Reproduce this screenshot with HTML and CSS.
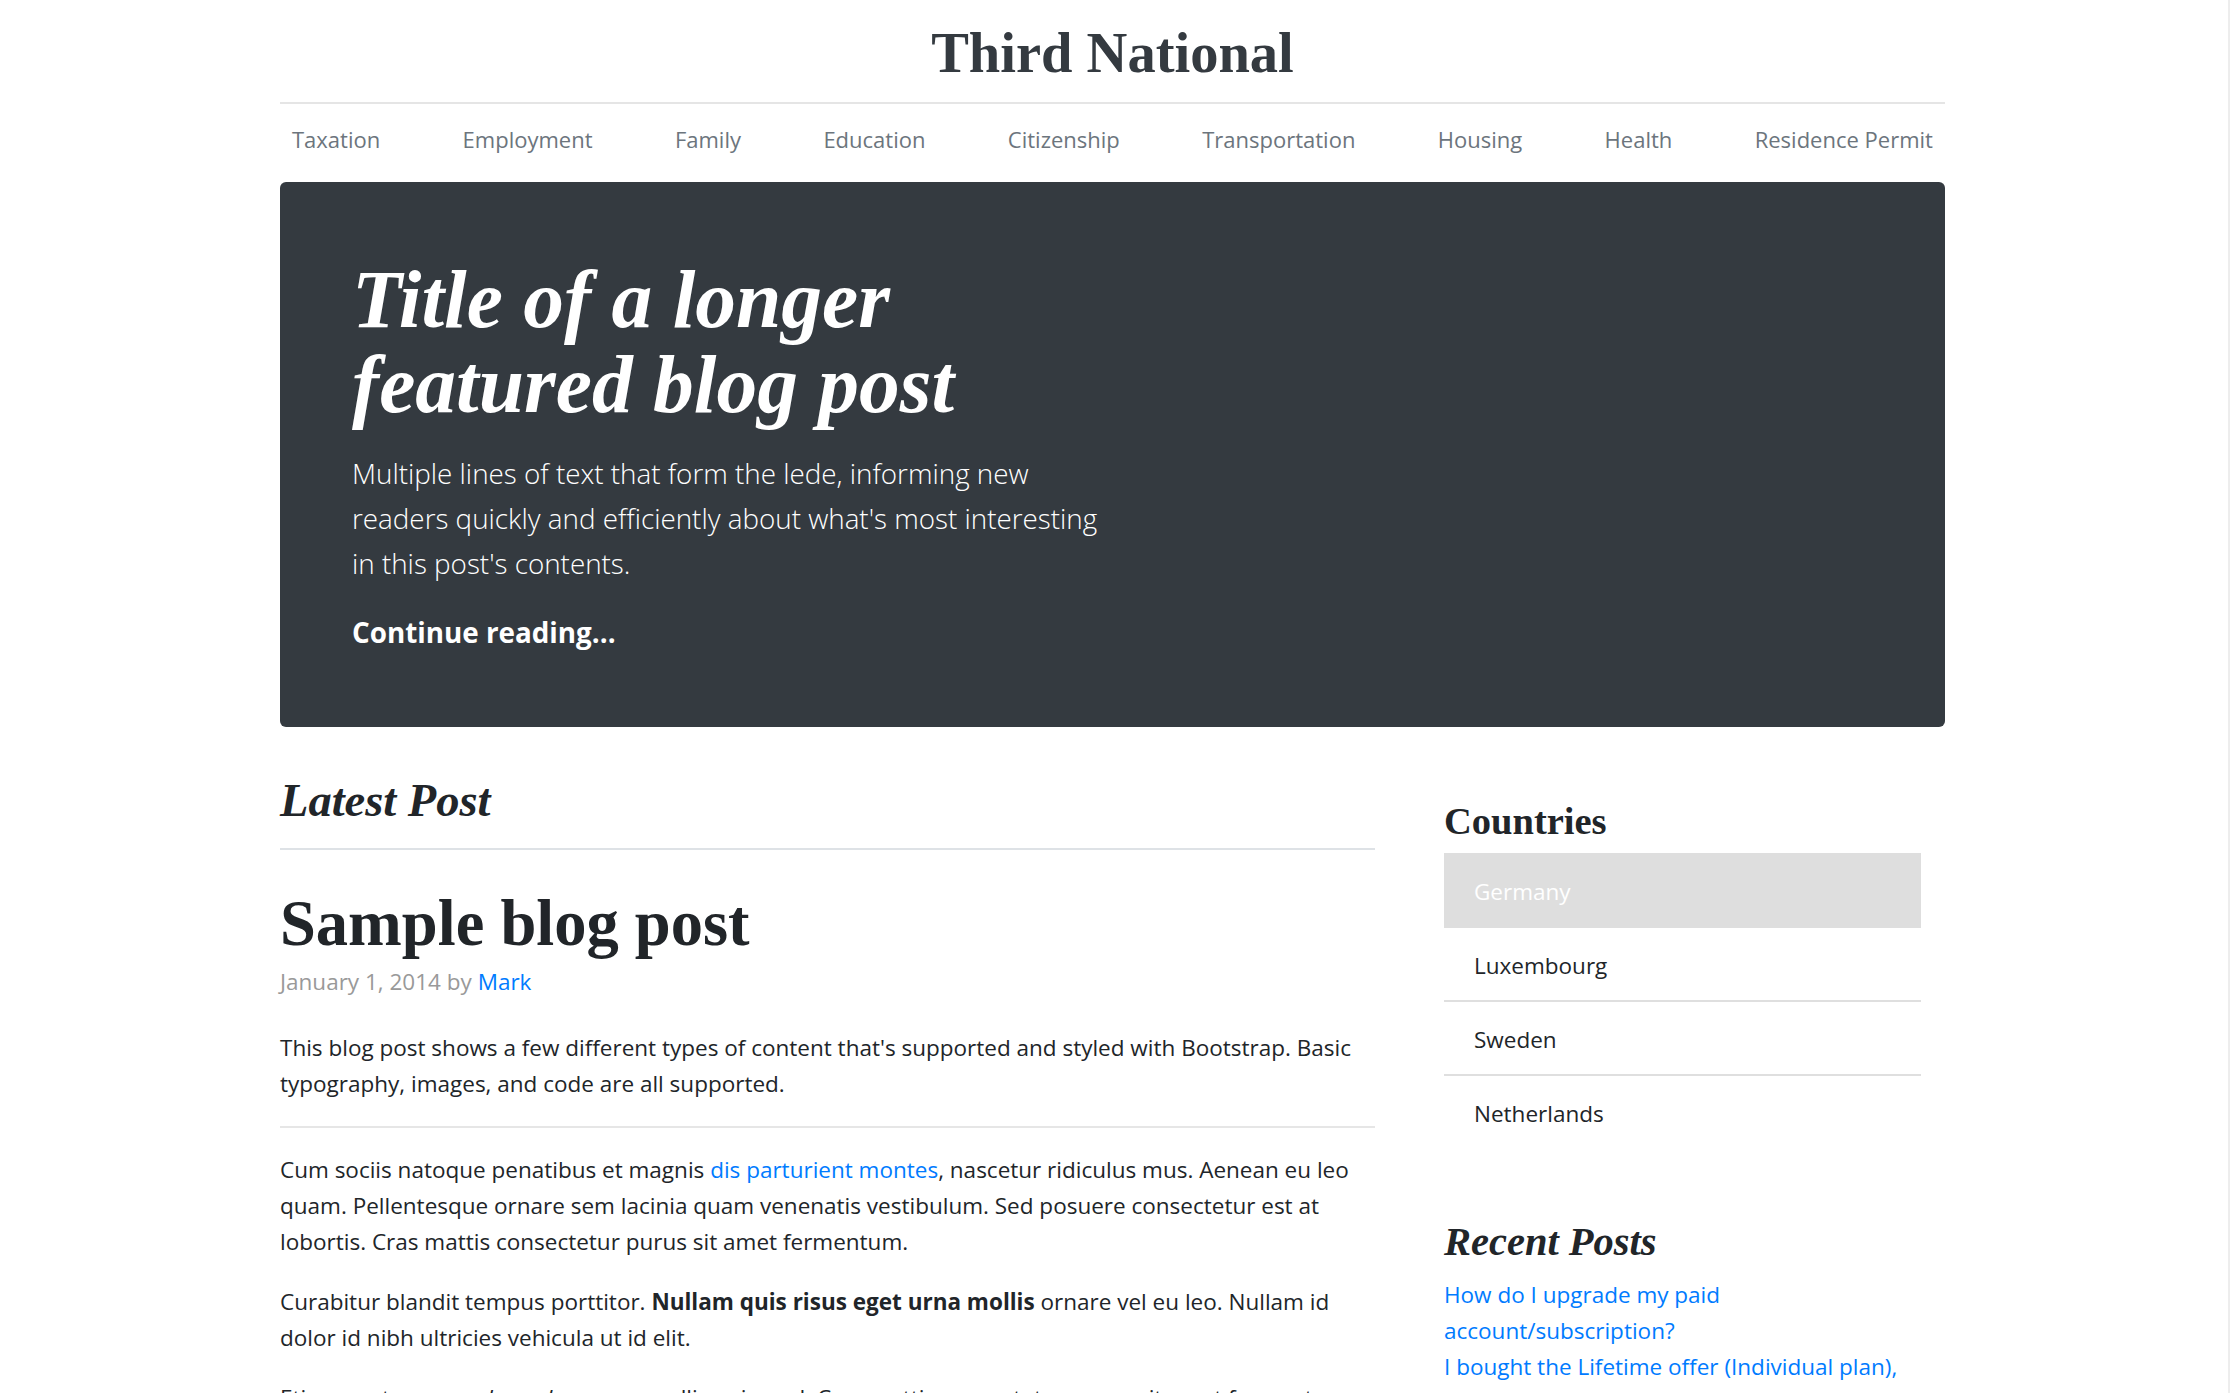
FILE: index.html
```html
<!DOCTYPE html>
<html lang="en">
<head>
<meta charset="utf-8">
<title>Third National</title>
<link rel="stylesheet" href="styles.css">
</head>
<body>
<div class="container">
  <header class="blog-header">
    <a class="blog-header-logo" href="#">Third National</a>
  </header>
  <div class="nav-scroller">
    <nav class="nav">
      <a class="nav-link" href="#">Taxation</a>
      <a class="nav-link" href="#">Employment</a>
      <a class="nav-link" href="#">Family</a>
      <a class="nav-link" href="#">Education</a>
      <a class="nav-link" href="#">Citizenship</a>
      <a class="nav-link" href="#">Transportation</a>
      <a class="nav-link" href="#">Housing</a>
      <a class="nav-link" href="#">Health</a>
      <a class="nav-link" href="#">Residence Permit</a>
    </nav>
  </div>
  <div class="jumbotron">
    <div class="jumbotron-col">
      <h1 class="display-title">Title of a longer featured blog post</h1>
      <p class="lead">Multiple lines of text that form the lede, informing new readers quickly and efficiently about what's most interesting in this post's contents.</p>
      <p class="lead lead-link"><a href="#">Continue reading...</a></p>
    </div>
  </div>
</div>
<main class="container">
  <div class="row">
    <div class="blog-main">
      <h3 class="section-title">Latest Post</h3>
      <div class="blog-post">
        <h2 class="blog-post-title">Sample blog post</h2>
        <p class="blog-post-meta">January 1, 2014 by <a href="#">Mark</a></p>
        <p>This blog post shows a few different types of content that's supported and styled with Bootstrap. Basic typography, images, and code are all supported.</p>
        <hr>
        <p>Cum sociis natoque penatibus et magnis <a href="#">dis parturient montes</a>, nascetur ridiculus mus. Aenean eu leo quam. Pellentesque ornare sem lacinia quam venenatis vestibulum. Sed posuere consectetur est at lobortis. Cras mattis consectetur purus sit amet fermentum.</p>
        <p>Curabitur blandit tempus porttitor. <strong>Nullam quis risus eget urna mollis</strong> ornare vel eu leo. Nullam id dolor id nibh ultricies vehicula ut id elit.</p>
        <p>Etiam porta <em>sem malesuada magna</em> mollis euismod. Cras mattis consectetur purus sit amet fermentum. Aenean lacinia bibendum nulla sed consectetur.</p>
      </div>
    </div>
    <aside class="blog-sidebar">
      <div class="side-block">
        <h4 class="side-title">Countries</h4>
        <div class="list-group">
          <a class="list-item active" href="#">Germany</a>
          <a class="list-item" href="#">Luxembourg</a>
          <a class="list-item" href="#">Sweden</a>
          <a class="list-item" href="#">Netherlands</a>
        </div>
      </div>
      <div class="side-block recent">
        <h4 class="side-title side-title-italic">Recent Posts</h4>
        <ol class="recent-list">
          <li><a href="#">How do I upgrade my paid account/subscription?</a></li>
          <li><a href="#">I bought the Lifetime offer (Individual plan), can I upgrade to a Team plan?</a></li>
          <li><a href="#">How do I cancel my subscription?</a></li>
        </ol>
      </div>
    </aside>
  </div>
</main>
</body>
</html>
```

FILE: styles.css
```css
* {
  box-sizing: border-box;
}

html {
  scrollbar-width: none;
}

body {
  margin: 0;
  padding-right: 3px;
  border-right: 2px solid #ededed;
  min-height: 100vh;
  font-family: "Open Sans", "Noto Sans", sans-serif;
  font-size: 22.5px;
  line-height: 36px;
  color: #212529;
  background: #fff;
}

a {
  color: #007bff;
  text-decoration: none;
}

.container {
  width: 1665px;
  margin: 0 auto;
}

/* Header */
.blog-header {
  padding: 26px 0 22px;
  border-bottom: 2px solid #e5e5e5;
  text-align: center;
}

.blog-header-logo {
  display: block;
  font-family: "Liberation Serif", "Times New Roman", serif;
  font-weight: 700;
  font-size: 56.5px;
  line-height: 54px;
  color: #343a40;
}

/* Nav */
.nav-scroller {
  height: 66px;
  padding: 8px 0 4px;
  margin-bottom: 12px;
  overflow: hidden;
}

.nav {
  display: flex;
  justify-content: space-between;
}

.nav-link {
  padding: 12px;
  font-size: 22px;
  line-height: 31.5px;
  color: #6c757d;
  white-space: nowrap;
}

/* Jumbotron */
.jumbotron {
  padding: 72px;
  margin-bottom: 36px;
  background: #343a40;
  border-radius: 6px;
  color: #fff;
}

.jumbotron-col {
  width: 760px;
}

.display-title {
  margin: 0 0 24px;
  padding-top: 3px;
  font-family: "Liberation Serif", "Times New Roman", serif;
  font-style: italic;
  font-weight: 700;
  font-size: 81.5px;
  line-height: 85px;
}

.lead {
  margin: 0 0 24px;
  font-size: 27.8px;
  font-weight: 300;
  line-height: 45px;
}

.lead-link {
  margin: 0;
  font-weight: 700;
}

.lead-link a {
  color: #fff;
}

/* Main layout */
.row {
  display: flex;
  margin: 0 -22.5px;
}

.blog-main {
  width: 1140px;
  padding: 0 22.5px;
}

.blog-sidebar {
  width: 570px;
  padding: 0 22.5px;
}

.section-title {
  margin: 0 0 34px;
  padding: 11px 0 20px;
  border-bottom: 2px solid #dee2e6;
  font-family: "Liberation Serif", "Times New Roman", serif;
  font-style: italic;
  font-weight: 700;
  font-size: 46.5px;
  line-height: 54px;
}

.blog-post-title {
  margin: 0;
  font-family: "Liberation Serif", "Times New Roman", serif;
  font-weight: 700;
  font-size: 64.5px;
  line-height: 80px;
}

.blog-post p {
  margin: 0 0 24px;
}

.blog-post .blog-post-meta {
  margin-bottom: 30px;
  color: #999;
}

.blog-post hr {
  margin: 24px 0;
  height: 0;
  border: 0;
  border-top: 2px solid #e6e6e6;
}

/* Sidebar */
.side-block {
  padding: 37px 24px 0;
}

.side-title {
  margin: 0 0 10px;
  font-family: "Liberation Serif", "Times New Roman", serif;
  font-weight: 700;
  font-size: 38.5px;
  line-height: 43px;
}

.list-group {
  display: flex;
  flex-direction: column;
}

.list-item {
  display: block;
  padding: 20px 30px 16px;
  line-height: 36px;
  color: #212529;
  border-bottom: 2px solid #dfdfdf;
}

.list-item:first-child {
  padding-top: 21px;
}

.list-item:last-child {
  border-bottom: 0;
}

.list-item.active {
  background: #dedede;
  color: #fff;
  border-bottom-color: #dedede;
}

.recent {
  padding-top: 70px;
}

.side-title-italic {
  margin-bottom: 11px;
  font-style: italic;
  font-size: 40.5px;
  line-height: 48px;
}

.recent-list {
  margin: 0;
  padding: 0;
  list-style: none;
}

.recent-list li {
  line-height: 36px;
}
```
